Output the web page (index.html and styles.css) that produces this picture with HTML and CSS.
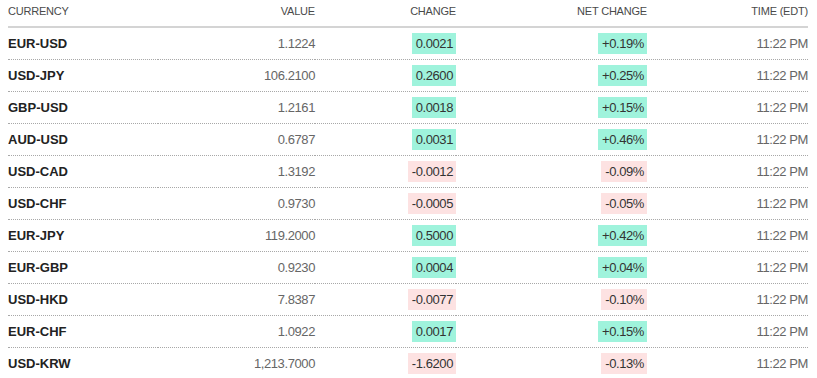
FILE: index.html
```html
<!DOCTYPE html>
<html lang="en">
<head>
    <meta charset="UTF-8">
    <title>Currencies</title>
    <link rel="stylesheet" href="styles.css">
</head>
<body>
    <table class="fx-table">
        <colgroup>
            <col class="col-name">
            <col class="col-value">
            <col class="col-change">
            <col class="col-net">
            <col class="col-time">
        </colgroup>
        <thead>
            <tr>
                <th class="left">CURRENCY</th>
                <th>VALUE</th>
                <th>CHANGE</th>
                <th>NET CHANGE</th>
                <th>TIME (EDT)</th>
            </tr>
        </thead>
        <tbody>
            <tr><td class="name">EUR-USD</td><td class="value">1.1224</td><td><span class="badge up">0.0021</span></td><td><span class="badge up">+0.19%</span></td><td class="time">11:22 PM</td></tr>
            <tr><td class="name">USD-JPY</td><td class="value">106.2100</td><td><span class="badge up">0.2600</span></td><td><span class="badge up">+0.25%</span></td><td class="time">11:22 PM</td></tr>
            <tr><td class="name">GBP-USD</td><td class="value">1.2161</td><td><span class="badge up">0.0018</span></td><td><span class="badge up">+0.15%</span></td><td class="time">11:22 PM</td></tr>
            <tr><td class="name">AUD-USD</td><td class="value">0.6787</td><td><span class="badge up">0.0031</span></td><td><span class="badge up">+0.46%</span></td><td class="time">11:22 PM</td></tr>
            <tr><td class="name">USD-CAD</td><td class="value">1.3192</td><td><span class="badge down">-0.0012</span></td><td><span class="badge down">-0.09%</span></td><td class="time">11:22 PM</td></tr>
            <tr><td class="name">USD-CHF</td><td class="value">0.9730</td><td><span class="badge down">-0.0005</span></td><td><span class="badge down">-0.05%</span></td><td class="time">11:22 PM</td></tr>
            <tr><td class="name">EUR-JPY</td><td class="value">119.2000</td><td><span class="badge up">0.5000</span></td><td><span class="badge up">+0.42%</span></td><td class="time">11:22 PM</td></tr>
            <tr><td class="name">EUR-GBP</td><td class="value">0.9230</td><td><span class="badge up">0.0004</span></td><td><span class="badge up">+0.04%</span></td><td class="time">11:22 PM</td></tr>
            <tr><td class="name">USD-HKD</td><td class="value">7.8387</td><td><span class="badge down">-0.0077</span></td><td><span class="badge down">-0.10%</span></td><td class="time">11:22 PM</td></tr>
            <tr><td class="name">EUR-CHF</td><td class="value">1.0922</td><td><span class="badge up">0.0017</span></td><td><span class="badge up">+0.15%</span></td><td class="time">11:22 PM</td></tr>
            <tr><td class="name">USD-KRW</td><td class="value">1,213.7000</td><td><span class="badge down">-1.6200</span></td><td><span class="badge down">-0.13%</span></td><td class="time">11:22 PM</td></tr>
        </tbody>
    </table>
</body>
</html>
```

FILE: styles.css
```css
/* Page */
body {
    margin: 1px 8px 0 8px;
    font-family: "Liberation Sans", Arial, sans-serif;
    color: #333;
    background: #ffffff;
}

/* Currency table */
.fx-table {
    width: 800px;
    border-collapse: collapse;
    table-layout: fixed;
}

.col-name { width: 150px; }
.col-value { width: 157px; }
.col-change { width: 141px; }
.col-net { width: 191px; }
.col-time { width: 161px; }

.fx-table th {
    height: 26px;
    padding: 0 0 5px 0;
    font-size: 11px;
    font-weight: 400;
    color: #4a4a4a;
    text-align: right;
    letter-spacing: -0.2px;
    border-bottom: 2px solid #d4d4d4;
    box-sizing: border-box;
}

.fx-table th.left {
    text-align: left;
}

.fx-table td {
    height: 31px;
    padding: 0;
    font-size: 13px;
    text-align: right;
    letter-spacing: -0.4px;
    border-bottom: 1px dotted #a8a8a8;
}

.fx-table tbody tr:last-child td {
    border-bottom: none;
}

.fx-table td.name {
    text-align: left;
    font-weight: 700;
    color: #222;
    letter-spacing: 0;
}

.value,
.time {
    color: #666;
}

/* Change badges */
.badge {
    display: inline-block;
    height: 21px;
    line-height: 21px;
    padding: 0 3px 0 4px;
    color: #333;
}

.badge.up {
    background-color: #9ff3dc;
}

.badge.down {
    background-color: #fde2e2;
}
```
